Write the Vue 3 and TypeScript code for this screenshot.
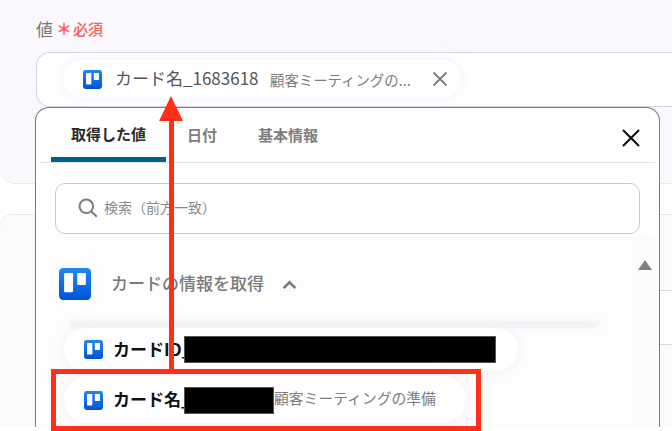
<script setup lang="ts">
const tabs: string[] = ['日付', '基本情報']
</script>

<template>
  <div class="scene">
    <section class="card first">
      <div class="label">
        <span class="name">値</span>
        <span class="star">＊</span>
        <span class="req">必須</span>
      </div>
      <div class="field">
        <div class="chip top-chip">
          <svg class="logo small" viewBox="0 0 20 20"><use href="#trello" /></svg>
          <span class="chip-title">カード名_1683618</span>
          <span class="chip-sub">顧客ミーティングの...</span>
          <svg class="chip-x" viewBox="0 0 16 16"><path d="M1.5 1.5l13 13M14.5 1.5l-13 13" /></svg>
        </div>
      </div>
    </section>

    <section class="card second">
      <div class="field lower"></div>
    </section>

    <div class="panel">
      <div class="tabs">
        <span class="tab active">取得した値</span>
        <span v-for="t in tabs" :key="t" class="tab">{{ t }}</span>
        <svg class="close" viewBox="0 0 18 18"><path d="M1 1l16 16M17 1L1 17" /></svg>
      </div>
      <div class="search">
        <svg class="glass" viewBox="0 0 20 20"><circle cx="8.3" cy="8.3" r="6.8" /><path d="M13.2 13.2l5.6 5.6" /></svg>
        <span class="hint">検索（前方一致）</span>
      </div>
      <div class="body">
        <div class="list">
          <div class="group">
            <svg class="logo big" viewBox="0 0 20 20"><use href="#trello" /></svg>
            <span class="group-title">カードの情報を取得</span>
            <svg class="chev" viewBox="0 0 14 9"><path d="M1.5 7.5L7 2l5.5 5.5" /></svg>
          </div>
          <div class="ghost"></div>
          <div class="chip row-one">
            <svg class="logo small" viewBox="0 0 20 20"><use href="#trello" /></svg>
            <span class="row-title">カードID_</span>
            <span class="mask long"></span>
          </div>
          <div class="chip row-two">
            <svg class="logo small" viewBox="0 0 20 20"><use href="#trello" /></svg>
            <span class="row-title lifted">カード名_</span>
            <span class="mask short"></span>
            <span class="row-sub">顧客ミーティングの準備</span>
          </div>
        </div>
        <div class="scroll"><span class="tri"></span></div>
      </div>
    </div>

    <div class="mark-line"></div>
    <div class="mark-head"></div>
    <div class="mark-box"></div>

    <svg width="0" height="0" class="defs">
      <defs>
        <linearGradient id="tg" x1="0" y1="0" x2="0" y2="1">
          <stop offset="0" stop-color="#1f8af0" />
          <stop offset="1" stop-color="#0052d6" />
        </linearGradient>
        <symbol id="trello" viewBox="0 0 20 20">
          <rect width="20" height="20" rx="2.6" fill="url(#tg)" />
          <rect x="3.2" y="3.2" width="5.6" height="12" rx="0.6" fill="#fff" />
          <rect x="11.4" y="3.2" width="5.4" height="7.4" rx="0.6" fill="#fff" />
        </symbol>
      </defs>
    </svg>
  </div>
</template>

<style scoped>
.scene {
  position: relative;
  width: 672px;
  height: 431px;
  overflow: hidden;
  background: #fff;
  font-family: "Noto Sans CJK JP", "Noto Sans", sans-serif;
  text-spacing-trim: space-all;
}
.defs { position: absolute; }
.card {
  box-sizing: border-box;
  width: 700px;
  background: #faf8fc;
  padding-left: 36px;
}
.first {
  height: 184px;
  padding-top: 16px;
  border-bottom: 1px solid #e9e8ee;
  border-bottom-left-radius: 16px;
}
.second {
  height: 212px;
  margin-top: 30px;
  padding-top: 75px;
  background: #fbfafc;
  border-top: 1px solid #e9e8ee;
  border-top-left-radius: 12px;
}
.label {
  display: flex;
  align-items: center;
  height: 24px;
  color: #777;
}
.name { font-size: 17px; }
.star { font-size: 16px; font-weight: 700; color: #ff5a5a; margin-left: 3px; width: 16px; }
.req { font-size: 15px; font-weight: 500; color: #ff5a5a; margin: 1px 0 0 1px; }
.field {
  box-sizing: border-box;
  height: 55px;
  margin-top: 12px;
  padding: 7px 0 0 26px;
  background: #fff;
  border: 1px solid #d6d6e2;
  border-radius: 14px 0 0 14px;
  border-right: 0;
}
.lower {
  margin-top: 0;
  height: 55px;
  border-left: 0;
}
.chip {
  display: flex;
  align-items: center;
  box-sizing: border-box;
  background: #fff;
  border-radius: 24px;
  box-shadow: 0 0 10px 3px rgba(243, 240, 248, 0.7);
}
.top-chip {
  width: 398px;
  height: 38px;
  padding-left: 20px;
}
.logo { flex: none; display: block; }
.small { width: 19px; height: 19px; }
.big { width: 32px; height: 32px; }
.chip-title {
  margin: -3px 0 0 13px;
  font-size: 17px;
  color: #555;
  white-space: nowrap;
  width: 155px;
  flex: none;
}
.chip-sub {
  font-size: 14.4px;
  color: #7d7d7d;
  white-space: nowrap;
  width: 162px;
  flex: none;
}
.chip-x {
  width: 16px;
  height: 16px;
  flex: none;
}
.chip-x path { stroke: #808080; stroke-width: 2; fill: none; }
.panel {
  position: absolute;
  left: 35px;
  top: 107px;
  box-sizing: border-box;
  width: 625px;
  height: 320px;
  padding: 0 4px;
  background: #fff;
  border: 1px solid #7a7a7a;
  border-bottom: 0;
  border-radius: 14px 14px 0 0;
}
.tabs {
  position: relative;
  display: flex;
  align-items: stretch;
  height: 54px;
  border-bottom: 1px solid #e4e4e8;
}
.tab {
  display: flex;
  align-items: center;
  justify-content: center;
  padding-bottom: 1px;
  font-size: 15px;
  font-weight: 700;
  color: #7d7d7d;
  white-space: nowrap;
  margin-left: 21px;
}
.tab:last-of-type { margin-left: 41px; }
.tab.active {
  box-sizing: border-box;
  width: 115px;
  margin: 0 0 0 11px;
  padding-top: 2px;
  color: #2a2a2a;
  padding-bottom: 0;
  border-bottom: 5px solid #005f86;
  border-radius: 4px 4px 0 0;
}
.close {
  position: absolute;
  right: 15px;
  top: 21px;
  width: 18px;
  height: 18px;
}
.close path { stroke: #0a0a0a; stroke-width: 2; fill: none; }
.search {
  display: flex;
  align-items: center;
  box-sizing: border-box;
  height: 51px;
  margin: 20px 15px 0 15px;
  padding-left: 22px;
  border: 1px solid #c9c9c9;
  border-radius: 10px;
  font-size: 14px;
  color: #8a8a8a;
}
.hint { margin-top: -4px; }
.glass {
  width: 20px;
  height: 20px;
  margin-right: 6px;
  margin-top: -2px;
  fill: none;
  stroke: #7b7b7b;
  stroke-width: 2;
}
.body {
  display: flex;
  height: 193px;
}
.list {
  flex: 1;
  min-width: 0;
  background: #fefdfe;
}
.group {
  display: flex;
  align-items: center;
  padding: 34px 0 0 19px;
}
.group-title {
  margin: -3px 0 0 20px;
  font-size: 17px;
  font-weight: 500;
  color: #7a7a7a;
  white-space: nowrap;
}
.chev {
  width: 15px;
  height: 10px;
  margin-left: 18px;
  margin-top: 2px;
  fill: none;
  stroke: #7a7a7a;
  stroke-width: 2.4;
}
.ghost {
  width: 530px;
  height: 7px;
  margin: 21px 0 0 30px;
  background: #f4f3f6;
  border-radius: 0 0 8px 8px;
  box-shadow: 0 0 6px 1px rgba(244, 242, 247, 0.6);
}
.row-one {
  width: 454px;
  height: 43px;
  margin-left: 24px;
  padding-left: 20px;
}
.row-two {
  width: 402px;
  height: 47px;
  margin: 5px 0 0 24px;
  padding: 2px 0 0 20px;
}
.row-title {
  margin: -2px 0 0 10px;
  font-size: 17px;
  font-weight: 700;
  color: #111;
  white-space: nowrap;
  width: 72px;
  flex: none;
  overflow: visible;
}
.row-title.lifted { margin-top: -4px; }
.mask {
  flex: none;
  display: block;
  height: 27px;
  background: #000;
  border: 1px solid #555;
  box-sizing: border-box;
  margin-left: -1px;
}
.long { width: 312px; }
.short { width: 90px; }
.row-sub {
  font-size: 14.8px;
  color: #7d7d7d;
  white-space: nowrap;
  margin-top: -6px;
}
.scroll {
  flex: none;
  width: 20px;
  background: #fcfbfd;
  padding: 26px 0 0 3px;
  box-sizing: border-box;
}
.tri {
  display: block;
  width: 0;
  height: 0;
  border-left: 7px solid transparent;
  border-right: 7px solid transparent;
  border-bottom: 10px solid #808080;
}
.mark-line {
  position: absolute;
  left: 168.5px;
  top: 118px;
  width: 5px;
  height: 252px;
  background: #ff2f1a;
}
.mark-head {
  position: absolute;
  left: 158.5px;
  top: 96px;
  width: 0;
  height: 0;
  border-left: 12.5px solid transparent;
  border-right: 12.5px solid transparent;
  border-bottom: 25px solid #ff2f1a;
}
.mark-box {
  position: absolute;
  left: 51px;
  top: 369px;
  box-sizing: border-box;
  width: 430px;
  height: 62px;
  border: 5px solid #ff2f1a;
}
</style>

<style>
html, body { background: #fff; margin: 0; }
</style>
